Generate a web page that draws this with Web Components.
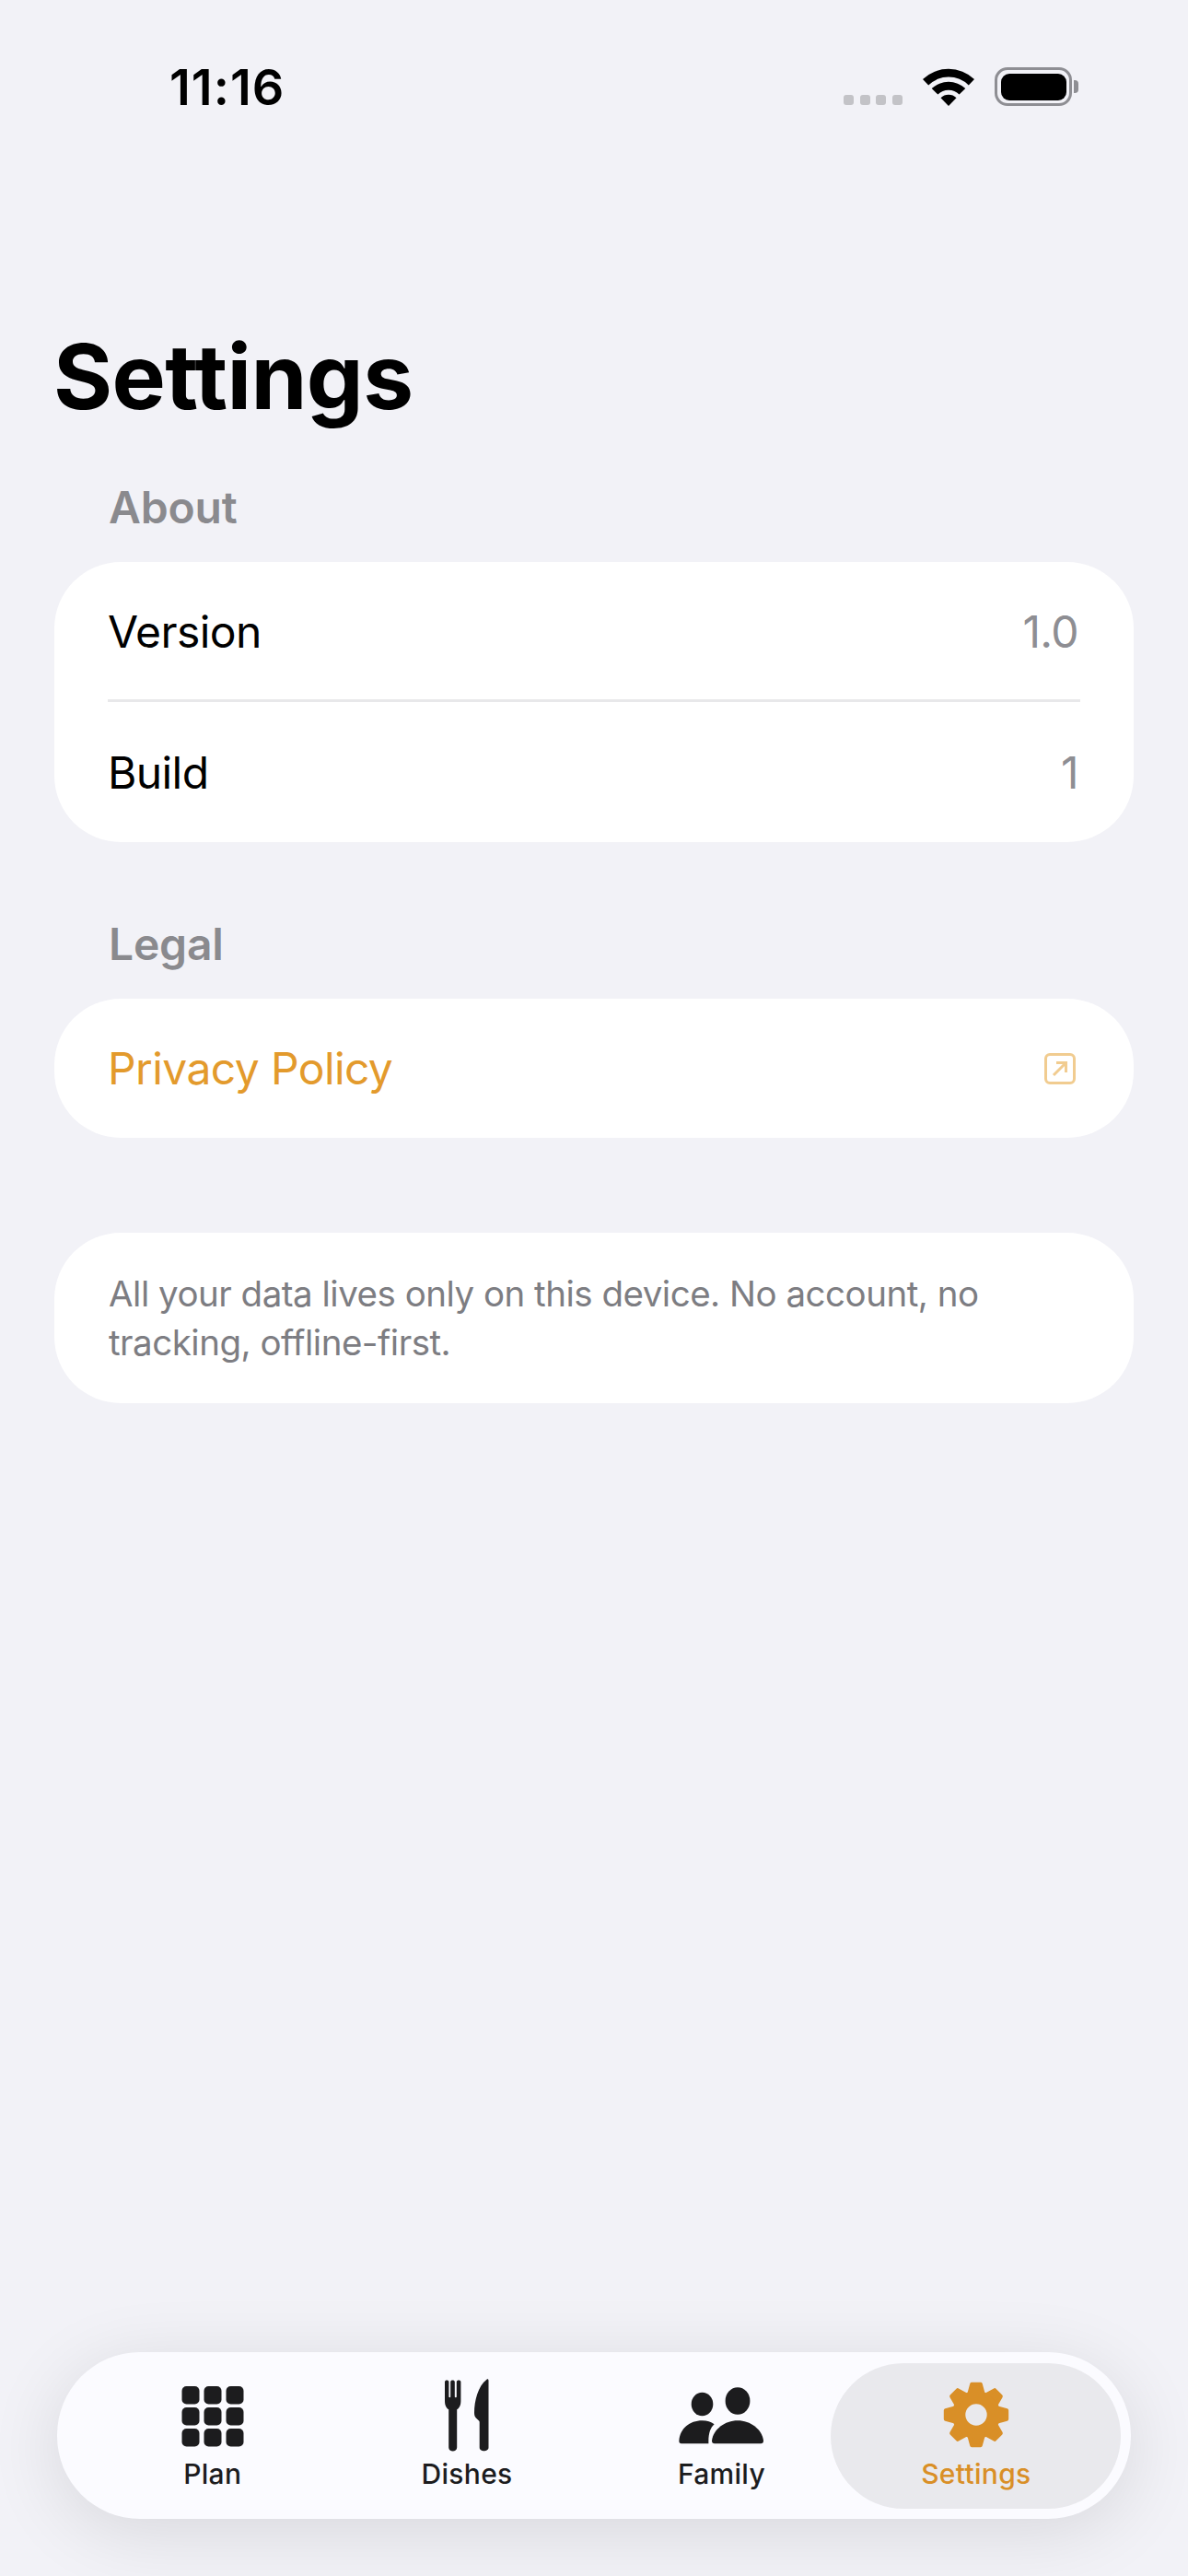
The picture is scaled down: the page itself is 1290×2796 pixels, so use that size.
<!DOCTYPE html>
<html>
<head>
<meta charset="utf-8">
<title>Settings</title>
<style>
  html, body { margin: 0; background: #f2f2f7; }
  body { font-family: Inter, "Liberation Sans", sans-serif; font-variant-ligatures: none; font-feature-settings: "calt" 0; }
</style>
</head>
<body>
<settings-screen>
  <status-bar slot="status"></status-bar>
  <span slot="title">Settings</span>

  <settings-section label="About">
    <settings-row>Version<span slot="value">1.0</span></settings-row>
    <settings-row divided>Build<span slot="value">1</span></settings-row>
  </settings-section>

  <settings-section label="Legal" class="legal">
    <settings-row accent>Privacy Policy
      <svg slot="value" width="36" height="36" viewBox="0 0 36 36" fill="none" stroke="#f1cc90" stroke-width="3">
        <rect x="2.5" y="2.5" width="31" height="31" rx="4.5"/>
        <path d="M11 25 L24 12 M14 11.5 H24.5 V22"/>
      </svg>
    </settings-row>
  </settings-section>

  <note-card>All your data lives only on this device. No account, no tracking, offline-first.</note-card>

  <tab-bar slot="tabs">
    <tab-item label="Plan">
      <svg width="80" height="80" viewBox="0 0 80 80" fill="#1c1c1e">
        <rect x="6.5" y="9" width="19" height="19.5" rx="5"/><rect x="30.5" y="9" width="19" height="19.5" rx="5"/><rect x="54.5" y="9" width="19" height="19.5" rx="5"/>
        <rect x="6.5" y="32" width="19" height="19.5" rx="5"/><rect x="30.5" y="32" width="19" height="19.5" rx="5"/><rect x="54.5" y="32" width="19" height="19.5" rx="5"/>
        <rect x="6.5" y="55" width="19" height="19.5" rx="5"/><rect x="30.5" y="55" width="19" height="19.5" rx="5"/><rect x="54.5" y="55" width="19" height="19.5" rx="5"/>
      </svg>
    </tab-item>
    <tab-item label="Dishes">
      <svg width="80" height="80" viewBox="0 0 80 80" fill="#1c1c1e">
        <g transform="translate(8 0)">
          <path d="M8 4.4 C8 1.9 12.4 1.9 12.4 4.4 V20.5 C12.4 21.6 14.2 21.6 14.2 20.5 V4.4 C14.2 1.9 18.8 1.9 18.8 4.4 V20.5 C18.8 21.6 20.8 21.6 20.8 20.5 V4.4 C20.8 1.9 25.4 1.9 25.4 4.4 V25 C25.4 30 23.5 33 21.2 34.2 V75.5 C21.2 80.8 12.2 80.8 12.2 75.5 V34.2 C9.9 33 8 30 8 25 Z"/>
          <path d="M53.5 1.8 C54.5 .8 55.5 1.4 55.5 3 V75.5 C55.5 80.6 45.7 80.6 45.7 75.5 V48 C45.7 47 45 46.3 43.5 45 C41 43 40 41.5 40 38 C40 25 44 9 53.5 1.8 Z"/>
        </g>
      </svg>
    </tab-item>
    <tab-item label="Family">
      <svg width="80" height="80" viewBox="0 0 80 80" fill="#1c1c1e" style="overflow:visible">
        <ellipse cx="19.5" cy="28.5" rx="11.8" ry="12.7"/>
        <ellipse cx="58" cy="25" rx="13.4" ry="14.7"/>
        <path d="M19.5 46.3 C25 46.3 29 47.6 32.6 50.2 C28.4 54 26 60 26.4 71.3 H-3 C-5 71.3 -5.8 70 -5.6 68 C-4.4 55 5.5 46.3 19.5 46.3 Z"/>
        <path d="M58 46.3 C72 46.3 84.5 56 86 68 C86.2 70 85 71.3 83 71.3 H33 C31 71.3 29.8 70 30 68 C31.5 56 44 46.3 58 46.3 Z"/>
      </svg>
    </tab-item>
    <tab-item label="Settings" active>
      <svg width="80" height="80" viewBox="-40 -40 80 80" fill="#d98f27" stroke="#d98f27" stroke-width="4" stroke-linejoin="round">
        <circle r="18.9" fill="none" stroke-width="14.4"/>
        <path d="M-7.6 -23 L-4.8 -33.2 H4.8 L7.6 -23 Z"/>
        <path d="M-7.6 -23 L-4.8 -33.2 H4.8 L7.6 -23 Z" transform="rotate(45)"/>
        <path d="M-7.6 -23 L-4.8 -33.2 H4.8 L7.6 -23 Z" transform="rotate(90)"/>
        <path d="M-7.6 -23 L-4.8 -33.2 H4.8 L7.6 -23 Z" transform="rotate(135)"/>
        <path d="M-7.6 -23 L-4.8 -33.2 H4.8 L7.6 -23 Z" transform="rotate(180)"/>
        <path d="M-7.6 -23 L-4.8 -33.2 H4.8 L7.6 -23 Z" transform="rotate(225)"/>
        <path d="M-7.6 -23 L-4.8 -33.2 H4.8 L7.6 -23 Z" transform="rotate(270)"/>
        <path d="M-7.6 -23 L-4.8 -33.2 H4.8 L7.6 -23 Z" transform="rotate(315)"/>
      </svg>
    </tab-item>
  </tab-bar>
</settings-screen>

<script>
class SettingsScreen extends HTMLElement {
    constructor() {
        super();
        this.attachShadow({ mode: 'open' }).innerHTML = `
          <style>
            :host {
              display: flex;
              flex-direction: column;
              box-sizing: border-box;
              height: 2796px;
              background: #f2f2f7;
              padding-bottom: 62px;
            }
            .title {
              margin: 191px 0 55px 58px;
              font-size: 98px;
              line-height: 116px;
              font-weight: 700;
              letter-spacing: -0.6px;
              color: #000;
            }
            .content {
              display: flex;
              flex-direction: column;
              padding: 0 59px;
              flex: 1;
            }
          </style>
          <slot name="status"></slot>
          <div class="title"><slot name="title"></slot></div>
          <div class="content"><slot></slot></div>
          <slot name="tabs"></slot>
        `;
    }
}

class StatusBar extends HTMLElement {
    constructor() {
        super();
        this.attachShadow({ mode: 'open' }).innerHTML = `
          <style>
            :host {
              display: flex;
              align-items: flex-end;
              box-sizing: border-box;
              height: 160px;
              padding: 0 119px 45px 184px;
            }
            .time {
              font-size: 54px;
              line-height: 50px;
              font-weight: 600;
              letter-spacing: 1px;
              color: #000;
              flex: 1;
              margin-bottom: -5px;
            }
            .dots { display: flex; gap: 6.6px; margin-right: 22px; margin-bottom: 1px; }
            .dots i { width: 11px; height: 11px; border-radius: 3px; background: #c3c3c7; }
            svg { display: block; }
            .battery {
              display: flex;
              align-items: center;
              margin-left: 22px;
            }
            .shell {
              box-sizing: border-box;
              width: 84px;
              height: 42px;
              border: 3.5px solid #8e8e93;
              border-radius: 14px;
              padding: 3.5px;
            }
            .fill { height: 100%; background: #000; border-radius: 9px; }
            .nub {
              width: 5px;
              height: 14px;
              margin-left: 2px;
              background: #8e8e93;
              border-radius: 0 4px 4px 0;
            }
          </style>
          <div class="time">11:16</div>
          <div class="dots"><i></i><i></i><i></i><i></i></div>
          <svg width="56" height="41" viewBox="0 0 56 41" fill="#000">
            <path d="M0 12 A40.7 40.7 0 0 1 56 12 L49.8 18.5 A31 31 0 0 0 6.2 18.5 Z"/>
            <path d="M9.7 22 A27 27 0 0 1 46.3 22 L39.6 28.6 A16.5 16.5 0 0 0 16.4 28.6 Z"/>
            <path d="M19.5 32.2 A12.5 12.5 0 0 1 36.5 32.2 L28 41 Z"/>
          </svg>
          <div class="battery"><div class="shell"><div class="fill"></div></div><div class="nub"></div></div>
        `;
    }
}

class SettingsSection extends HTMLElement {
    static get observedAttributes() {
        return ['label'];
    }

    constructor() {
        super();
        this.attachShadow({ mode: 'open' }).innerHTML = `
          <style>
            :host { display: block; margin-bottom: 82px; }
            .label {
              margin: 0 0 30px 59px;
              font-size: 48px;
              line-height: 58px;
              font-weight: 600;
              letter-spacing: -0.2px;
              color: #8a8a8e;
            }
            .card {
              background: #fff;
              border-radius: 72px;
              padding: 0 58px;
            }
          </style>
          <div class="label"></div>
          <div class="card"><slot></slot></div>
        `;
    }

    attributeChangedCallback(name, oldVal, newVal) {
        this.shadowRoot.querySelector('.label').textContent = newVal;
    }
}

class SettingsRow extends HTMLElement {
    constructor() {
        super();
        this.attachShadow({ mode: 'open' }).innerHTML = `
          <style>
            :host {
              display: flex;
              align-items: center;
              justify-content: space-between;
              box-sizing: border-box;
              height: 149px;
              padding-top: 2px;
              font-size: 48px;
              letter-spacing: -0.6px;
              color: #000;
            }
            :host([divided]) { border-top: 3px solid #e8e8ea; height: 155px; padding-top: 0; }
            :host([accent]) { color: #e39a2c; height: 151px; padding-top: 0; }
            .value { display: flex; color: #8e8e93; padding-right: 2px; }
            ::slotted(svg) { display: block; margin-right: 2px; }
          </style>
          <span><slot></slot></span>
          <span class="value"><slot name="value"></slot></span>
        `;
    }
}

class NoteCard extends HTMLElement {
    constructor() {
        super();
        this.attachShadow({ mode: 'open' }).innerHTML = `
          <style>
            :host {
              display: block;
              box-sizing: border-box;
              height: 185px;
              margin-top: 21px;
              padding: 40px 59px;
              background: #fff;
              border-radius: 72px;
              font-size: 38.5px;
              line-height: 53px;
              letter-spacing: -0.5px;
              color: #7d7d82;
            }
          </style>
          <slot></slot>
        `;
    }
}

class TabBar extends HTMLElement {
    constructor() {
        super();
        this.attachShadow({ mode: 'open' }).innerHTML = `
          <style>
            :host {
              display: grid;
              grid-template-columns: repeat(4, 1fr);
              box-sizing: border-box;
              height: 181px;
              margin: 0 62px;
              padding: 28px 30px 0 30.5px;
              background: #fbfbff;
              border-radius: 90px;
              box-shadow: 0 14px 80px rgba(0, 0, 0, 0.11);
            }
          </style>
          <slot></slot>
        `;
    }
}

class TabItem extends HTMLElement {
    static get observedAttributes() {
        return ['label'];
    }

    constructor() {
        super();
        this.attachShadow({ mode: 'open' }).innerHTML = `
          <style>
            :host {
              display: flex;
              flex-direction: column;
              align-items: center;
              position: relative;
              color: #1c1c1e;
            }
            :host([active]) { color: #d98f27; }
            :host([active])::before {
              content: "";
              position: absolute;
              top: -16px;
              bottom: 11px;
              left: -20px;
              right: -19px;
              background: #e9e9ed;
              border-radius: 79px;
            }
            .icon { position: relative; height: 80px; }
            ::slotted(svg) { display: block; }
            .label {
              position: relative;
              margin-top: 6px;
              font-size: 30px;
              line-height: 36px;
              font-weight: 500;
              letter-spacing: 0.3px;
            }
          </style>
          <div class="icon"><slot></slot></div>
          <div class="label"></div>
        `;
    }

    attributeChangedCallback(name, oldVal, newVal) {
        this.shadowRoot.querySelector('.label').textContent = newVal;
    }
}

window.customElements.define('settings-screen', SettingsScreen);
window.customElements.define('status-bar', StatusBar);
window.customElements.define('settings-section', SettingsSection);
window.customElements.define('settings-row', SettingsRow);
window.customElements.define('note-card', NoteCard);
window.customElements.define('tab-bar', TabBar);
window.customElements.define('tab-item', TabItem);
</script>
</body>
</html>
